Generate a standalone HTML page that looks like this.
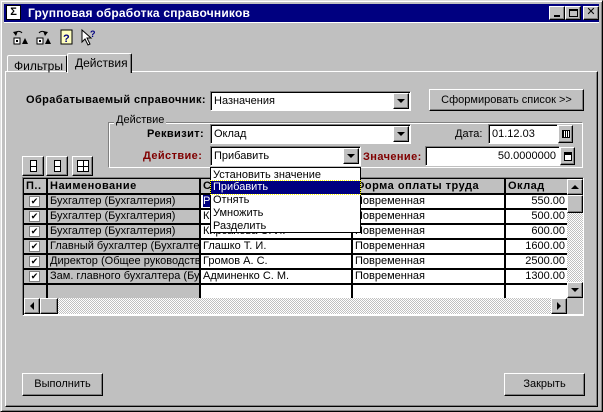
<!DOCTYPE html>
<html><head><meta charset="utf-8"><style>
*{box-sizing:border-box;margin:0;padding:0}
body{width:603px;height:412px;background:#c0c0c0;font-family:"Liberation Sans","DejaVu Sans",sans-serif;font-size:11px;color:#000;position:relative;overflow:hidden}
.a{position:absolute}
.out{border:1px solid;border-color:#fff #000 #000 #fff;box-shadow:inset -1px -1px 0 #808080}
.in{border:1px solid;border-color:#808080 #fff #fff #808080;box-shadow:inset 1px 1px 0 #000;background:#fff}
.btn{background:#c0c0c0;text-align:center}
.dd{background:#c0c0c0;border:1px solid;border-color:#fff #000 #000 #fff;box-shadow:inset -1px -1px 0 #808080}
.tri{position:absolute;left:50%;top:50%;margin:-2px 0 0 -4px;width:0;height:0;border-left:4px solid transparent;border-right:4px solid transparent;border-top:4px solid #000}
.b{font-weight:bold;letter-spacing:0.4px}
.red{color:#800000;font-weight:bold;letter-spacing:0.4px}
.t{white-space:nowrap;line-height:13px}
.grid td{border-right:2px solid #000;border-bottom:2px solid #000;height:15px;padding:0 2px;white-space:nowrap;overflow:hidden;line-height:13px}
.ck{display:inline-block;width:11px;height:11px;border:1px solid #808080;background:#fff;font-size:9px;line-height:9px;text-align:center;margin-left:3px}
</style></head><body>
<div class="a" style="left:0;top:0;width:603px;height:412px;border:1px solid;border-color:#dfdfdf #000 #000 #dfdfdf;box-shadow:inset 1px 1px 0 #fff,inset -1px -1px 0 #808080"></div>
<div class="a" style="left:4px;top:4px;width:595px;height:18px;background:#000080"></div>
<div class="a" style="left:6px;top:5px;width:15px;height:15px;background:#fff;border:1px solid #000;font-size:11px;font-weight:bold;line-height:13px;text-align:center">Σ</div>
<div class="a b t" style="left:28px;top:7px;color:#fff;font-size:12px;letter-spacing:0.2px">Групповая обработка справочников</div>
<div class="a out btn" style="left:549px;top:6px;width:16px;height:14px"><div class="a" style="left:4px;top:8px;width:6px;height:2px;background:#000"></div></div>
<div class="a out btn" style="left:565px;top:6px;width:16px;height:14px"><div class="a" style="left:3px;top:2px;width:9px;height:8px;border:1px solid #000;border-top-width:2px"></div></div>
<div class="a out btn" style="left:583px;top:6px;width:16px;height:14px;font-weight:bold;line-height:11px;font-size:11px">✕</div>
<div class="a" style="left:4px;top:22px;width:595px;height:1px;background:#fff"></div>
<svg class="a" style="left:12px;top:28px" width="90" height="18">
<path d="M3 6 A4 4 0 0 1 10 5" fill="none" stroke="#000"/><path d="M1 4 L4 8 L6 3Z" fill="#000"/>
<rect x="2" y="10" width="6" height="6" fill="#fff" stroke="#000"/><rect x="4" y="12" width="2" height="2"/><path d="M10 16 L13 10 L16 16Z"/>
<path d="M27 5 A4 4 0 0 1 34 6" fill="none" stroke="#000"/><path d="M36 4 L33 8 L31 3Z" fill="#000"/>
<rect x="25" y="10" width="6" height="6" fill="#fff" stroke="#000"/><rect x="27" y="12" width="2" height="2"/><path d="M33 16 L36 10 L39 16Z"/>
<rect x="49" y="2" width="11" height="14" fill="#ffffc0" stroke="#000"/><text x="51" y="14" font-size="11" font-weight="bold" fill="#000080" font-family="Liberation Sans">?</text>
<path d="M70 2 L70 14 L73 11 L76 17 L78 16 L75 10 L79 10Z" fill="#fff" stroke="#000"/><text x="78" y="9" font-size="9" font-weight="bold" fill="#000080" font-family="Liberation Sans">?</text>
</svg>
<div class="a" style="left:5px;top:71px;width:593px;height:336px;border:1px solid;border-color:#fff #000 #000 #fff;box-shadow:inset -1px -1px 0 #808080"></div>
<div class="a" style="left:7px;top:55px;width:60px;height:17px;border:1px solid;border-color:#fff #000 transparent #fff;border-bottom:none;border-radius:2px 2px 0 0"></div>
<div class="a t" style="left:14px;top:60px;font-size:12px">Фильтры</div>
<div class="a" style="left:67px;top:53px;width:65px;height:20px;background:#c0c0c0;border:1px solid;border-color:#fff #000 transparent #fff;border-bottom:none;box-shadow:inset -1px 0 0 #808080;border-radius:2px 2px 0 0"></div>
<div class="a t" style="left:75px;top:57px;font-size:12px">Действия</div>
<div class="a b t" style="left:26px;top:94px">Обрабатываемый справочник:</div>
<div class="a in" style="left:210px;top:91px;width:201px;height:20px"><div class="a t" style="left:3px;top:3px">Назначения</div><div class="a dd" style="right:1px;top:1px;width:16px;height:16px"><div class="tri"></div></div></div>
<div class="a out btn" style="left:429px;top:89px;width:155px;height:22px;line-height:20px">Сформировать список &gt;&gt;</div>
<div class="a" style="left:108px;top:122px;width:475px;height:46px;border:1px solid;border-color:#808080 #fff #fff #808080;box-shadow:inset 1px 1px 0 #fff"></div>
<div class="a t" style="left:114px;top:114px;background:#c0c0c0;padding:0 2px">Действие</div>
<div class="a b t" style="left:147px;top:128px">Реквизит:</div>
<div class="a in" style="left:210px;top:124px;width:201px;height:20px"><div class="a t" style="left:3px;top:3px">Оклад</div><div class="a dd" style="right:1px;top:1px;width:16px;height:16px"><div class="tri"></div></div></div>
<div class="a t" style="left:455px;top:128px">Дата:</div>
<div class="a in" style="left:488px;top:124px;width:70px;height:20px"><div class="a t" style="left:3px;top:3px">01.12.03</div></div>
<div class="a out btn" style="left:558px;top:125px;width:15px;height:18px"><div class="a" style="left:3px;top:4px;width:8px;height:8px;border:1px solid #000;background:repeating-linear-gradient(90deg,#000 0 1px,#fff 1px 2px)"></div></div>
<div class="a red t" style="left:143px;top:150px">Действие:</div>
<div class="a in" style="left:210px;top:146px;width:151px;height:20px"><div class="a t" style="left:3px;top:3px">Прибавить</div><div class="a dd" style="right:1px;top:1px;width:16px;height:16px"><div class="tri"></div></div></div>
<div class="a red t" style="left:363px;top:151px">Значение:</div>
<div class="a in" style="left:425px;top:146px;width:135px;height:20px"><div class="a t" style="right:3px;top:3px">50.0000000</div></div>
<div class="a out btn" style="left:560px;top:147px;width:15px;height:18px"><div class="a" style="left:3px;top:4px;width:8px;height:9px;border:1px solid #000;background:#fff;border-top-width:3px"></div></div>
<div class="a out btn" style="left:22px;top:156px;width:22px;height:20px"><div class="a" style="left:7px;top:3px;width:7px;height:12px;border:1px solid #000;background:linear-gradient(#fff 5px,#000 5px,#000 6px,#fff 6px)"></div></div>
<div class="a out btn" style="left:46px;top:156px;width:22px;height:20px"><div class="a" style="left:7px;top:3px;width:7px;height:12px;border:1px solid #000;background:linear-gradient(#fff 5px,#000 5px,#000 6px,#fff 6px)"></div></div>
<div class="a out btn" style="left:72px;top:156px;width:21px;height:20px"><div class="a" style="left:4px;top:3px;width:12px;height:12px;border:1px solid #000;background:linear-gradient(90deg,transparent 5px,#000 5px,#000 6px,transparent 6px),linear-gradient(#fff 5px,#000 5px,#000 6px,#fff 6px)"></div></div>
<div class="a" style="left:22px;top:177px;width:562px;height:139px;border:1px solid;border-color:#808080 #fff #fff #808080;box-shadow:inset 1px 1px 0 #000;background:#fff;overflow:hidden">
<table class="grid a" style="left:1px;top:1px;border-collapse:collapse;table-layout:fixed;width:544px">
<colgroup><col style="width:23px"><col style="width:153px"><col style="width:152px"><col style="width:153px"><col style="width:63px"></colgroup>
<tr style="background:#c0c0c0;font-weight:bold;letter-spacing:0.5px"><td>П..</td><td>Наименование</td><td>С</td><td>Форма оплаты труда</td><td>Оклад</td></tr>
<tr><td style="background:#c0c0c0"><span class="ck">✔</span></td><td style="background:#c0c0c0">Бухгалтер (Бухгалтерия)</td><td><span style="background:#000080;color:#fff">Р</span></td><td>Повременная</td><td style="text-align:right">550.00</td></tr>
<tr><td style="background:#c0c0c0"><span class="ck">✔</span></td><td style="background:#c0c0c0">Бухгалтер (Бухгалтерия)</td><td>К</td><td>Повременная</td><td style="text-align:right">500.00</td></tr>
<tr><td style="background:#c0c0c0"><span class="ck">✔</span></td><td style="background:#c0c0c0">Бухгалтер (Бухгалтерия)</td><td>Кирсанова С. И.</td><td>Повременная</td><td style="text-align:right">600.00</td></tr>
<tr><td style="background:#c0c0c0"><span class="ck">✔</span></td><td style="background:#c0c0c0">Главный бухгалтер (Бухгалтерия)</td><td>Глашко Т. И.</td><td>Повременная</td><td style="text-align:right">1600.00</td></tr>
<tr><td style="background:#c0c0c0"><span class="ck">✔</span></td><td style="background:#c0c0c0">Директор (Общее руководство)</td><td>Громов А. С.</td><td>Повременная</td><td style="text-align:right">2500.00</td></tr>
<tr><td style="background:#c0c0c0"><span class="ck">✔</span></td><td style="background:#c0c0c0">Зам. главного бухгалтера (Бух)</td><td>Админенко С. М.</td><td>Повременная</td><td style="text-align:right">1300.00</td></tr>
<tr><td style="background:#c0c0c0;height:14px;border-bottom:none"></td><td style="background:#c0c0c0;border-bottom:none"></td><td style="border-bottom:none"></td><td style="border-bottom:none"></td><td style="border-bottom:none"></td></tr>
</table>
<div class="a" style="left:544px;top:1px;width:16px;height:119px;background:repeating-conic-gradient(#fff 0 25%,#c0c0c0 0 50%) 0 0/2px 2px"></div>
<div class="a out btn" style="left:544px;top:1px;width:16px;height:16px"><div class="tri" style="border-top:none;border-bottom:4px solid #000"></div></div>
<div class="a out btn" style="left:544px;top:17px;width:16px;height:18px"></div>
<div class="a out btn" style="left:544px;top:104px;width:16px;height:16px"><div class="tri"></div></div>
<div class="a" style="left:1px;top:120px;width:543px;height:16px;background:repeating-conic-gradient(#fff 0 25%,#c0c0c0 0 50%) 0 0/2px 2px"></div>
<div class="a out btn" style="left:1px;top:120px;width:16px;height:16px"><div class="tri" style="border:4px solid transparent;border-left:none;border-right:4px solid #000;margin:-4px 0 0 -2px"></div></div>
<div class="a out btn" style="left:17px;top:120px;width:18px;height:16px"></div>
<div class="a out btn" style="left:528px;top:120px;width:16px;height:16px"><div class="tri" style="border:4px solid transparent;border-right:none;border-left:4px solid #000;margin:-4px 0 0 -2px"></div></div>
<div class="a" style="left:544px;top:120px;width:16px;height:16px;background:#c0c0c0"></div>
</div>
<div class="a" style="left:210px;top:167px;width:151px;height:66px;background:#fff;border:1px solid #000">
<div class="a t" style="left:2px;top:1px">Установить значение</div>
<div class="a t" style="left:0;top:13px;width:149px;height:13px;background:#000080;color:#fff;padding-left:2px;outline:1px dotted #ff0">Прибавить</div>
<div class="a t" style="left:2px;top:26px">Отнять</div>
<div class="a t" style="left:2px;top:39px">Умножить</div>
<div class="a t" style="left:2px;top:52px">Разделить</div>
</div>
<div class="a out btn" style="left:22px;top:373px;width:81px;height:23px;line-height:21px">Выполнить</div>
<div class="a out btn" style="left:504px;top:373px;width:81px;height:23px;line-height:21px">Закрыть</div>
</body></html>
